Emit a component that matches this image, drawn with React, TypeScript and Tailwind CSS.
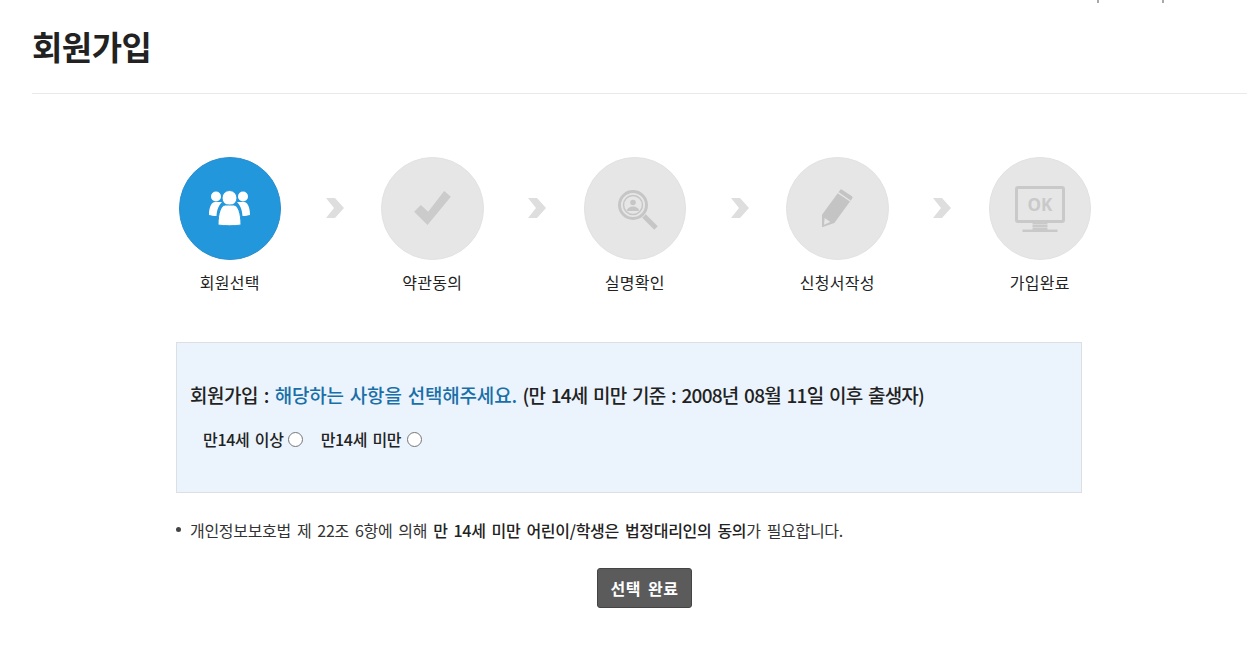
import React from 'react';

const font = "font-['Noto_Sans_CJK_KR','Noto_Sans',sans-serif]";

function UsersIcon() {
  return (
    <svg width="41" height="36" viewBox="0 0 41 36" fill="#fff">
      <circle cx="7" cy="6.500" r="5" />
      <circle cx="34" cy="6.500" r="5" />
      <path d="M0 25c0-9 3-13 6-13h7c-3 3-5 7-5.500 14c-3 0-5.500-.5-7.500-1z" />
      <path d="M41 25c0-9-3-13-6-13h-7c3 3 5 7 5.500 14c3 0 5.500-.5 7.500-1z" />
      <circle cx="20.500" cy="8" r="7.500" stroke="#2397dc" strokeWidth="1" />
      <path d="M9 35c0-12 3-20 7.500-20h8c4.500 0 7.500 8 7.500 20c-6 1-17 1-23 0z" stroke="#2397dc" strokeWidth="1" />
    </svg>
  );
}

function CheckIcon() {
  return (
    <svg width="37" height="34" viewBox="0 0 110 102" fill="#cbcbcb">
      <path d="M0 62L20 42L42 62L90 0L110 17L40 102z" />
    </svg>
  );
}

function SearchIcon() {
  return (
    <svg className="ml-[6px] mt-[4px]" width="40" height="40" viewBox="0 0 40 40" fill="none">
      <circle cx="15" cy="15" r="13.500" stroke="#c6c6c6" strokeWidth="3" />
      <circle cx="15" cy="15" r="9.500" stroke="#c6c6c6" strokeWidth="1.500" />
      <circle cx="15" cy="12.500" r="2.800" fill="#c6c6c6" />
      <path d="M9 21c0-3 3-4.500 6-4.500s6 1.500 6 4.500z" fill="#c6c6c6" />
      <path d="M26 26l12 12" stroke="#c6c6c6" strokeWidth="5" />
    </svg>
  );
}

function PencilIcon() {
  return (
    <svg width="32" height="39" viewBox="0 0 94 117">
      <path d="M2 77L57 2Q59 0 62 2L92 22Q95 25 93 28L39 102L2 115z" fill="#c4c4c4" />
      <path d="M50 11L87 36" stroke="#e6e6e6" strokeWidth="4" />
      <path d="M10 87L27 99L8 107z" fill="#e6e6e6" />
    </svg>
  );
}

function OkIcon() {
  return (
    <svg className="mt-[2px]" width="50" height="46" viewBox="0 0 50 46" fill="none">
      <rect x="1.500" y="1.500" width="47" height="34" rx="1.500" stroke="#c9c9c9" strokeWidth="3" />
      <text x="25" y="25" textAnchor="middle" fontSize="17" fontWeight="700" fill="#c9c9c9" fontFamily="'Open Sans', sans-serif">OK</text>
      <path d="M17.500 37h15M17.500 40h15M17.500 43h15" stroke="#c9c9c9" strokeWidth="2.400" />
      <rect x="7.500" y="43.500" width="35" height="2.500" fill="#c9c9c9" />
    </svg>
  );
}

function Arrow() {
  return (
    <svg width="18" height="20" viewBox="0 0 18 20" fill="#dedede">
      <path d="M0 0H9L18 10L9 20H0L8 10z" />
    </svg>
  );
}

const steps = [
  { label: '회원선택', icon: <UsersIcon />, active: true },
  { label: '약관동의', icon: <CheckIcon /> },
  { label: '실명확인', icon: <SearchIcon /> },
  { label: '신청서작성', icon: <PencilIcon /> },
  { label: '가입완료', icon: <OkIcon /> },
];

export default function App() {
  return (
    <div className={`${font} bg-white text-[#222] min-h-[665px] overflow-hidden`}>
      <div className="flex justify-end h-[3px]">
        <div className="w-[2px] h-[3px] bg-[#aaa] mr-[63px]" />
        <div className="w-[2px] h-[3px] bg-[#aaa] mr-[83px]" />
      </div>

      <div className="ml-[32px] border-b border-[#eaeaea] h-[91px] pt-[20px]">
        <h1 className="text-[33px] leading-[46px] font-bold tracking-[-0.5px]">회원가입</h1>
      </div>

      <div className="flex ml-[178.5px] mt-[63px]">
        {steps.map((step, i) => (
          <React.Fragment key={step.label}>
            <div className="flex flex-col items-center w-[102.5px]">
              <div
                className={`flex items-center justify-center w-[102.5px] h-[102.5px] rounded-full border ${
                  step.active ? 'bg-[#2397dc] border-[#2a8fcf]' : 'bg-[#e6e6e6] border-[#e2e2e2]'
                }`}
              >
                {step.icon}
              </div>
              <div className="mt-[11px] whitespace-nowrap text-[16px] leading-[22px] tracking-[0.3px]">{step.label}</div>
            </div>
            {i < steps.length - 1 && (
              <div className="w-[100px] h-[102.5px] flex items-center justify-center pl-[7px]">
                <Arrow />
              </div>
            )}
          </React.Fragment>
        ))}
      </div>

      <div className="ml-[176px] mt-[49px] w-[906px] h-[151px] border border-[#dcdfe3] bg-[#ebf4fc] pl-[13px] pt-[38px]">
        <p className="text-[19px] leading-[28px] font-medium tracking-[-0.75px] [word-spacing:2px] whitespace-nowrap">
          <span className="tracking-[-0.5px]">회원가입 : </span>
          <span className="text-[#1a6fa8] tracking-[-0.2px]">해당하는 사항을 선택해주세요.</span> (만 14세 미만 기준 : 2008년 08월 11일 이후 출생자)
        </p>
        <div className="flex items-center ml-[13px] mt-[20px] text-[16px] leading-[21px] font-medium tracking-[-0.3px] [word-spacing:2px]">
          <label className="flex items-center gap-[4px]">
            만14세 이상
            <input type="radio" name="age" className="appearance-none w-[15px] h-[15px] rounded-full border-[1.5px] border-[#767676] bg-white" />
          </label>
          <label className="flex items-center gap-[6px] ml-[18px]">
            만14세 미만
            <input type="radio" name="age" className="appearance-none w-[15px] h-[15px] rounded-full border-[1.5px] border-[#767676] bg-white" />
          </label>
        </div>
      </div>

      <div className="ml-[176px] mt-[26px] flex items-center text-[16px] leading-[22px] tracking-[-0.3px] [word-spacing:2.700px] text-[#333]">
        <span className="w-[5px] h-[5px] rounded-full bg-[#444] mr-[9px]" />
        <p className="whitespace-nowrap">
          개인정보보호법 제 22조 6항에 의해 <span className="font-medium text-[#222]">만 14세 미만 어린이/학생은 법정대리인의 동의</span>가 필요합니다.
        </p>
      </div>

      <div className="flex justify-center mt-[27px] pl-[42px]">
        <button className="w-[95px] h-[40px] rounded-[3px] bg-[#5b5b5b] border border-[#444] text-white text-[16px] font-bold tracking-[0.5px] [word-spacing:3px]">
          선택 완료
        </button>
      </div>
    </div>
  );
}
